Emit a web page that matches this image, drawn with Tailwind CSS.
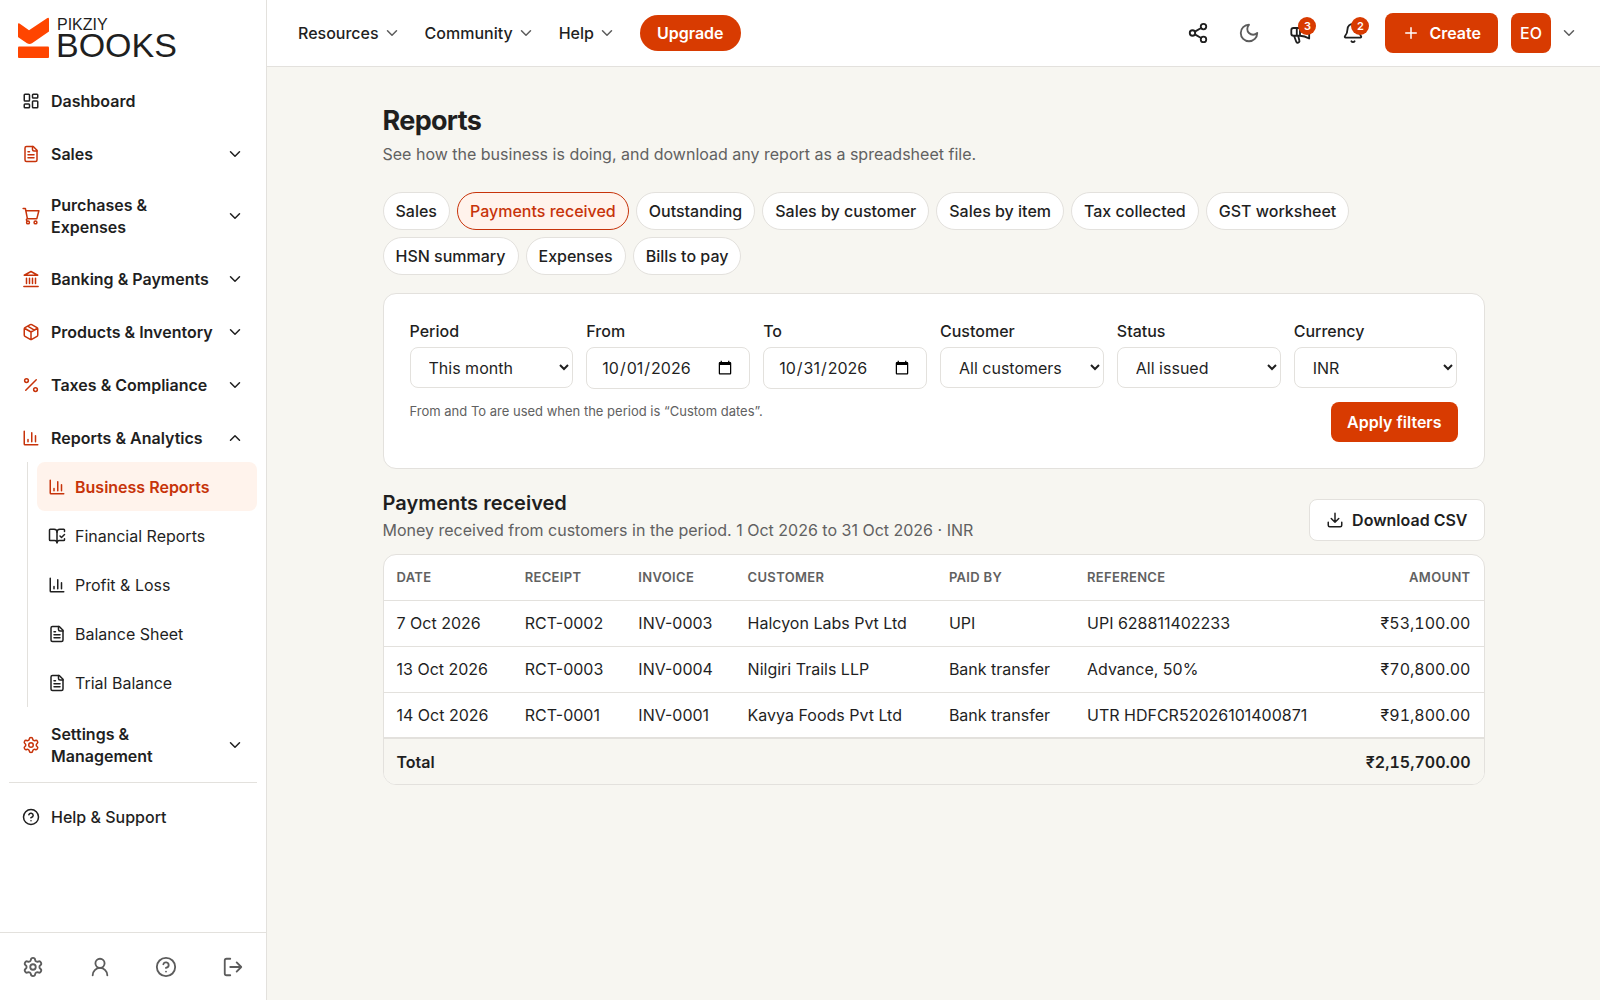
<!DOCTYPE html>
<html lang="en">
<head>
  <meta charset="UTF-8" />
  <meta name="viewport" content="width=device-width, initial-scale=1.0"/>
  <title>Reports - Pikziy Books</title>
  <script src="https://cdn.jsdelivr.net/npm/@tailwindcss/browser@4"></script>
</head>
<body class="min-h-screen flex bg-[#f7f6f1] text-[#1f1f1f] text-base font-['Inter',sans-serif]">

  <!-- Icon set -->
  <svg class="hidden" aria-hidden="true">
    <symbol id="i-dashboard" viewBox="0 0 24 24"><rect x="3" y="3" width="7" height="9" rx="1"/><rect x="14" y="3" width="7" height="5" rx="1"/><rect x="14" y="12" width="7" height="9" rx="1"/><rect x="3" y="16" width="7" height="5" rx="1"/></symbol>
    <symbol id="i-file" viewBox="0 0 24 24"><path d="M15 2H6a2 2 0 0 0-2 2v16a2 2 0 0 0 2 2h12a2 2 0 0 0 2-2V7Z"/><path d="M14 2v4a2 2 0 0 0 2 2h4M10 9H8M16 13H8M16 17H8"/></symbol>
    <symbol id="i-cart" viewBox="0 0 24 24"><circle cx="8" cy="20.500" r="1.900"/><circle cx="18" cy="20.500" r="1.900"/><path d="M1.500 2h3l2.700 13.500h12.600L22.500 5H5.100M7.200 15.500Q5 16 6.500 18.500"/></symbol>
    <symbol id="i-bank" viewBox="0 0 24 24"><path d="M2.500 22h19M6 18v-7M10 18v-7M14 18v-7M18 18v-7M12 2l9 5H3z"/></symbol>
    <symbol id="i-package" viewBox="0 0 24 24"><path d="M11 21.73a2 2 0 0 0 2 0l7-4A2 2 0 0 0 21 16V8a2 2 0 0 0-1-1.73l-7-4a2 2 0 0 0-2 0l-7 4A2 2 0 0 0 3 8v8a2 2 0 0 0 1 1.73zM12 22V12M3.29 7 12 12l8.71-5M7.5 4.27l9 5.15"/></symbol>
    <symbol id="i-percent" viewBox="0 0 24 24"><path d="M19 5 5 19"/><circle cx="6" cy="6" r="2.5"/><circle cx="18" cy="18" r="2.5"/></symbol>
    <symbol id="i-chart" viewBox="0 0 24 24"><path d="M3 3v17a1 1 0 0 0 1 1h17M18 17V9M13 17V5M8 17v-3"/></symbol>
    <symbol id="i-book" viewBox="0 0 24 24"><path d="M12 21V7M16 12l2 2 4-4"/><path d="M22 6V4a1 1 0 0 0-1-1h-5a4 4 0 0 0-4 4 4 4 0 0 0-4-4H3a1 1 0 0 0-1 1v13a1 1 0 0 0 1 1h6a3 3 0 0 1 3 3 3 3 0 0 1 3-3h6a1 1 0 0 0 1-1v-1.3"/></symbol>
    <symbol id="i-settings" viewBox="0 0 24 24"><path d="M9.671 4.136a2.34 2.34 0 0 1 4.659 0 2.34 2.34 0 0 0 3.319 1.915 2.34 2.34 0 0 1 2.33 4.033 2.34 2.34 0 0 0 0 3.831 2.34 2.34 0 0 1-2.33 4.033 2.34 2.34 0 0 0-3.319 1.915 2.34 2.34 0 0 1-4.659 0 2.34 2.34 0 0 0-3.32-1.915 2.34 2.34 0 0 1-2.33-4.033 2.34 2.34 0 0 0 0-3.831A2.34 2.34 0 0 1 6.35 6.051a2.34 2.34 0 0 0 3.319-1.915"/><circle cx="12" cy="12" r="3"/></symbol>
    <symbol id="i-help" viewBox="0 0 24 24"><circle cx="12" cy="12" r="10"/><path d="M9.09 9a3 3 0 0 1 5.83 1c0 2-3 3-3 3M12 17h.01"/></symbol>
    <symbol id="i-user" viewBox="0 0 24 24"><circle cx="12" cy="8" r="5"/><path d="M20 21a8 8 0 0 0-16 0"/></symbol>
    <symbol id="i-logout" viewBox="0 0 24 24"><path d="M9 21H5a2 2 0 0 1-2-2V5a2 2 0 0 1 2-2h4M16 17l5-5-5-5M21 12H9"/></symbol>
    <symbol id="i-down" viewBox="0 0 24 24"><path d="m6 9 6 6 6-6"/></symbol>
    <symbol id="i-up" viewBox="0 0 24 24"><path d="m18 15-6-6-6 6"/></symbol>
    <symbol id="i-share" viewBox="0 0 24 24"><circle cx="18" cy="5" r="3"/><circle cx="6" cy="12" r="3"/><circle cx="18" cy="19" r="3"/><path d="m8.59 13.51 6.83 3.98M15.41 6.51l-6.82 3.98"/></symbol>
    <symbol id="i-moon" viewBox="0 0 24 24"><path d="M12 3a6 6 0 0 0 9 9 9 9 0 1 1-9-9Z"/></symbol>
    <symbol id="i-megaphone" viewBox="0 0 24 24"><path d="M8.500 6.500v8.500M12 15V6.500H5a2.500 2.500 0 0 0-2.500 2.500v3.500A2.500 2.500 0 0 0 5 15h7c4 0 7 1.200 10 3V3c-3 2-6 3.500-10 3.500M5.500 15l2.300 6.300a1.800 1.800 0 0 0 3.500-1.100L10 15"/></symbol>
    <symbol id="i-bell" viewBox="0 0 24 24"><path d="M10.268 21a2 2 0 0 0 3.464 0M3.262 15.326A1 1 0 0 0 4 17h16a1 1 0 0 0 .74-1.673C19.41 13.956 18 12.499 18 8A6 6 0 0 0 6 8c0 4.499-1.411 5.956-2.738 7.326"/></symbol>
    <symbol id="i-plus" viewBox="0 0 24 24"><path d="M5 12h14M12 5v14"/></symbol>
    <symbol id="i-download" viewBox="0 0 24 24"><path d="M12 15V3M21 15v4a2 2 0 0 1-2 2H5a2 2 0 0 1-2-2v-4M7 10l5 5 5-5"/></symbol>
  </svg>

  <!-- Sidebar -->
  <aside class="w-[267px] shrink-0 h-screen sticky top-0 flex flex-col bg-white border-r border-[#e3e1dd] [&_svg]:shrink-0 [&_svg]:fill-none [&_svg]:stroke-current [&_svg]:stroke-2 [&_svg]:[stroke-linecap:round] [&_svg]:[stroke-linejoin:round]">
    <a href="#" class="flex gap-2 pl-[18px] pt-[17px] pb-[18px]" aria-label="Pikziy Books">
      <svg viewBox="0 0 31 41" class="w-[31px] h-[41px]"><path stroke="none" fill="#ff4500" d="M1.500 6.500 11 13.200 29 1.200Q31 0 31 2.200V14.500L14 26.200Q11.500 27.800 9 26.200L.6 20.600Q0 20.200 0 19.400V7.300Q0 5.700 1.500 6.500Z"/><rect stroke="none" fill="#ff4500" y="29.500" width="31" height="11.500" rx="1"/></svg>
      <span class="flex flex-col font-['Liberation_Sans',Arial,sans-serif]">
        <span class="text-base leading-[15px]">PIKZIY</span>
        <span class="text-[34px] leading-[26px] -ml-px">BOOKS</span>
      </span>
    </a>

    <nav class="flex-1 px-[9px] flex flex-col font-semibold leading-[22px]">
      <a href="#" class="min-h-[49px] mb-1 px-[13px] flex items-center gap-[11px]"><svg class="size-[18px]"><use href="#i-dashboard"/></svg>Dashboard</a>
      <button class="min-h-[49px] mb-1 px-[13px] flex items-center gap-[11px] text-left"><svg class="size-[18px] text-[#c7330a]"><use href="#i-file"/></svg><span class="flex-1">Sales</span><svg class="size-[18px]"><use href="#i-down"/></svg></button>
      <button class="min-h-[49px] mb-1 px-[13px] py-3 flex items-center gap-[11px] text-left"><svg class="size-[18px] text-[#c7330a]"><use href="#i-cart"/></svg><span class="flex-1">Purchases &amp;<br>Expenses</span><svg class="size-[18px]"><use href="#i-down"/></svg></button>
      <button class="min-h-[49px] mb-1 px-[13px] flex items-center gap-[11px] text-left"><svg class="size-[18px] text-[#c7330a]"><use href="#i-bank"/></svg><span class="flex-1 whitespace-nowrap">Banking &amp; Payments</span><svg class="size-[18px]"><use href="#i-down"/></svg></button>
      <button class="min-h-[49px] mb-1 px-[13px] flex items-center gap-[11px] text-left"><svg class="size-[18px] text-[#c7330a]"><use href="#i-package"/></svg><span class="flex-1 whitespace-nowrap">Products &amp; Inventory</span><svg class="size-[18px]"><use href="#i-down"/></svg></button>
      <button class="min-h-[49px] mb-1 px-[13px] flex items-center gap-[11px] text-left"><svg class="size-[18px] text-[#c7330a]"><use href="#i-percent"/></svg><span class="flex-1 whitespace-nowrap">Taxes &amp; Compliance</span><svg class="size-[18px]"><use href="#i-down"/></svg></button>
      <button class="min-h-[49px] px-[13px] flex items-center gap-[11px] text-left"><svg class="size-[18px] text-[#c7330a]"><use href="#i-chart"/></svg><span class="flex-1 whitespace-nowrap">Reports &amp; Analytics</span><svg class="size-[18px]"><use href="#i-up"/></svg></button>

      <div class="ml-[18px] mb-1 pl-[9px] border-l border-[#e3e1dd] flex flex-col font-normal">
        <a href="#" class="h-[49px] px-[11px] flex items-center gap-[9px] rounded-lg bg-[#fff3ec] text-[#c7330a] font-semibold"><svg class="size-[18px]"><use href="#i-chart"/></svg>Business Reports</a>
        <a href="#" class="h-[49px] px-[11px] flex items-center gap-[9px]"><svg class="size-[18px]"><use href="#i-book"/></svg>Financial Reports</a>
        <a href="#" class="h-[49px] px-[11px] flex items-center gap-[9px]"><svg class="size-[18px]"><use href="#i-chart"/></svg>Profit &amp; Loss</a>
        <a href="#" class="h-[49px] px-[11px] flex items-center gap-[9px]"><svg class="size-[18px]"><use href="#i-file"/></svg>Balance Sheet</a>
        <a href="#" class="h-[49px] px-[11px] flex items-center gap-[9px]"><svg class="size-[18px]"><use href="#i-file"/></svg>Trial Balance</a>
      </div>

      <button class="min-h-[49px] px-[13px] py-3 flex items-center gap-[11px] text-left"><svg class="size-[18px] text-[#c7330a]"><use href="#i-settings"/></svg><span class="flex-1">Settings &amp;<br>Management</span><svg class="size-[18px]"><use href="#i-down"/></svg></button>
      <div class="mt-[3px] pt-[9px] border-t border-[#e3e1dd]">
        <a href="#" class="min-h-[49px] px-[13px] flex items-center gap-[11px] font-medium"><svg class="size-[18px]"><use href="#i-help"/></svg>Help &amp; Support</a>
      </div>
    </nav>

    <div class="h-[68px] px-[22px] flex items-center justify-between border-t border-[#e3e1dd] text-[#5c5c5c]">
      <button aria-label="Settings"><svg class="size-[22px]"><use href="#i-settings"/></svg></button>
      <button aria-label="Account"><svg class="size-[22px]"><use href="#i-user"/></svg></button>
      <button aria-label="Help"><svg class="size-[22px]"><use href="#i-help"/></svg></button>
      <button aria-label="Log out"><svg class="size-[22px]"><use href="#i-logout"/></svg></button>
    </div>
  </aside>

  <div class="flex-1 min-w-0 [&_svg]:shrink-0 [&_svg]:fill-none [&_svg]:stroke-current [&_svg]:stroke-2 [&_svg]:[stroke-linecap:round] [&_svg]:[stroke-linejoin:round]">

    <!-- Top bar -->
    <header class="h-[67px] pl-[31px] pr-[22px] flex items-center bg-white border-b border-[#e3e1dd]">
      <nav class="flex items-center gap-6 font-medium">
        <button class="flex items-center gap-1">Resources<svg class="size-[18px] text-[#5c5c5c]"><use href="#i-down"/></svg></button>
        <button class="flex items-center gap-1">Community<svg class="size-[18px] text-[#5c5c5c]"><use href="#i-down"/></svg></button>
        <button class="flex items-center gap-1">Help<svg class="size-[18px] text-[#5c5c5c]"><use href="#i-down"/></svg></button>
        <a href="#" class="h-9 px-[17px] flex items-center rounded-full bg-[#d83b01] text-white font-semibold">Upgrade</a>
      </nav>
      <div class="ml-auto flex items-center">
        <button class="mr-[29px]" aria-label="Share"><svg class="size-[22px]"><use href="#i-share"/></svg></button>
        <button class="mr-[29px] text-[#5c5c5c]" aria-label="Dark mode"><svg class="size-[22px]"><use href="#i-moon"/></svg></button>
        <button class="relative mr-[31px]" aria-label="Announcements"><svg class="size-[22px]"><use href="#i-megaphone"/></svg><span class="absolute -top-[5px] -right-[5px] size-[18px] flex items-center justify-center rounded-full bg-[#d83b01] text-white text-[11px] font-semibold">3</span></button>
        <button class="relative mr-[21px]" aria-label="Notifications"><svg class="size-[22px]"><use href="#i-bell"/></svg><span class="absolute -top-[5px] -right-[5px] size-[18px] flex items-center justify-center rounded-full bg-[#d83b01] text-white text-[11px] font-semibold">2</span></button>
        <button class="h-10 px-[17px] mr-[13px] flex items-center gap-[9px] rounded-lg bg-[#d83b01] text-white font-semibold"><svg class="size-[18px]"><use href="#i-plus"/></svg>Create</button>
        <button class="flex items-center gap-[9px] font-medium" aria-label="Account menu"><span class="size-10 flex items-center justify-center rounded-lg bg-[#d83b01] text-white">EO</span><svg class="size-[18px] text-[#5c5c5c]"><use href="#i-down"/></svg></button>
      </div>
    </header>

    <main class="max-w-[1102px] mx-auto pt-9 pb-9">
      <h1 class="text-[27px] leading-[36px] font-bold tracking-tight">Reports</h1>
      <p class="mt-1 leading-[22px] text-[#616161]">See how the business is doing, and download any report as a spreadsheet file.</p>

      <div class="mt-[27px] flex flex-wrap gap-[7px] font-medium leading-[22px]">
        <a href="#" class="px-3 py-[7px] rounded-full border border-[#e3e1dd] bg-white">Sales</a>
        <a href="#" class="px-3 py-[7px] rounded-full border border-[#c7330a] bg-[#fff3ec] text-[#c7330a]">Payments received</a>
        <a href="#" class="px-3 py-[7px] rounded-full border border-[#e3e1dd] bg-white">Outstanding</a>
        <a href="#" class="px-3 py-[7px] rounded-full border border-[#e3e1dd] bg-white">Sales by customer</a>
        <a href="#" class="px-3 py-[7px] rounded-full border border-[#e3e1dd] bg-white">Sales by item</a>
        <a href="#" class="px-3 py-[7px] rounded-full border border-[#e3e1dd] bg-white">Tax collected</a>
        <a href="#" class="px-3 py-[7px] rounded-full border border-[#e3e1dd] bg-white">GST worksheet</a>
        <a href="#" class="px-3 py-[7px] rounded-full border border-[#e3e1dd] bg-white">HSN summary</a>
        <a href="#" class="px-3 py-[7px] rounded-full border border-[#e3e1dd] bg-white">Expenses</a>
        <a href="#" class="px-3 py-[7px] rounded-full border border-[#e3e1dd] bg-white">Bills to pay</a>
      </div>

      <!-- Filters -->
      <form class="mt-[18px] p-[26px] rounded-[13px] border border-[#e3e1dd] bg-white">
        <div class="grid grid-cols-6 items-start gap-[13px]">
          <div>
            <label for="period" class="block mb-[5px] leading-[22px] font-medium">Period</label>
            <select id="period" class="w-full h-[41px] px-[14px] rounded-lg border border-[#e3e1dd] bg-white"><option>This month</option><option>Custom dates</option></select>
          </div>
          <div>
            <label for="from" class="block mb-[5px] leading-[22px] font-medium">From</label>
            <input id="from" type="date" value="2026-10-01" class="w-full h-[42px] px-[14px] rounded-lg border border-[#e3e1dd] bg-white" />
          </div>
          <div>
            <label for="to" class="block mb-[5px] leading-[22px] font-medium">To</label>
            <input id="to" type="date" value="2026-10-31" class="w-full h-[42px] px-[14px] rounded-lg border border-[#e3e1dd] bg-white" />
          </div>
          <div>
            <label for="customer" class="block mb-[5px] leading-[22px] font-medium">Customer</label>
            <select id="customer" class="w-full h-[41px] px-[14px] rounded-lg border border-[#e3e1dd] bg-white"><option>All customers</option></select>
          </div>
          <div>
            <label for="status" class="block mb-[5px] leading-[22px] font-medium">Status</label>
            <select id="status" class="w-full h-[41px] px-[14px] rounded-lg border border-[#e3e1dd] bg-white"><option>All issued</option></select>
          </div>
          <div>
            <label for="currency" class="block mb-[5px] leading-[22px] font-medium">Currency</label>
            <select id="currency" class="w-full h-[41px] px-[14px] rounded-lg border border-[#e3e1dd] bg-white"><option>INR</option></select>
          </div>
        </div>
        <div class="mt-[13px] flex justify-between items-start">
          <p class="text-[13px] leading-[18px] text-[#616161]">From and To are used when the period is “Custom dates”.</p>
          <button type="submit" class="h-10 px-4 rounded-lg bg-[#d83b01] text-white font-semibold">Apply filters</button>
        </div>
      </form>

      <!-- Report -->
      <div class="mt-5 flex justify-between items-end">
        <div>
          <h2 class="text-[20px] leading-7 font-semibold">Payments received</h2>
          <p class="mt-0.5 leading-[22px] text-[#616161]">Money received from customers in the period. 1 Oct 2026 to 31 Oct 2026 · INR</p>
        </div>
        <button class="h-[42px] px-4 flex items-center gap-2 rounded-lg border border-[#e3e1dd] bg-white font-semibold"><svg class="size-[18px]"><use href="#i-download"/></svg>Download CSV</button>
      </div>

      <div class="mt-[13px] rounded-[13px] border border-[#e3e1dd] bg-white overflow-hidden">
        <table class="w-full text-left whitespace-nowrap leading-[22px]">
          <thead class="text-[13px] text-[#616161] tracking-wide">
            <tr class="h-[45px] border-b border-[#e3e1dd]">
              <th class="px-[13px] font-semibold">DATE</th>
              <th class="px-[13px] font-semibold">RECEIPT</th>
              <th class="px-[13px] font-semibold">INVOICE</th>
              <th class="px-[13px] font-semibold">CUSTOMER</th>
              <th class="px-[13px] font-semibold">PAID BY</th>
              <th class="px-[13px] font-semibold">REFERENCE</th>
              <th class="px-[13px] font-semibold text-right">AMOUNT</th>
            </tr>
          </thead>
          <tbody>
            <tr class="h-[46px] border-b border-[#e3e1dd]">
              <td class="px-[13px]">7 Oct 2026</td>
              <td class="px-[13px]">RCT-0002</td>
              <td class="px-[13px]">INV-0003</td>
              <td class="px-[13px]">Halcyon Labs Pvt Ltd</td>
              <td class="px-[13px]">UPI</td>
              <td class="px-[13px]">UPI 628811402233</td>
              <td class="px-[13px] text-right tabular-nums">₹53,100.00</td>
            </tr>
            <tr class="h-[46px] border-b border-[#e3e1dd]">
              <td class="px-[13px]">13 Oct 2026</td>
              <td class="px-[13px]">RCT-0003</td>
              <td class="px-[13px]">INV-0004</td>
              <td class="px-[13px]">Nilgiri Trails LLP</td>
              <td class="px-[13px]">Bank transfer</td>
              <td class="px-[13px]">Advance, 50%</td>
              <td class="px-[13px] text-right tabular-nums">₹70,800.00</td>
            </tr>
            <tr class="h-[46px]">
              <td class="px-[13px]">14 Oct 2026</td>
              <td class="px-[13px]">RCT-0001</td>
              <td class="px-[13px]">INV-0001</td>
              <td class="px-[13px]">Kavya Foods Pvt Ltd</td>
              <td class="px-[13px]">Bank transfer</td>
              <td class="px-[13px]">UTR HDFCR52026101400871</td>
              <td class="px-[13px] text-right tabular-nums">₹91,800.00</td>
            </tr>
          </tbody>
          <tfoot>
            <tr class="h-[46px] border-t-2 border-[#e3e1dd] bg-[#f7f6f1] font-semibold">
              <td class="px-[13px]" colspan="6">Total</td>
              <td class="px-[13px] text-right tabular-nums">₹2,15,700.00</td>
            </tr>
          </tfoot>
        </table>
      </div>
    </main>
  </div>

</body>
</html>
